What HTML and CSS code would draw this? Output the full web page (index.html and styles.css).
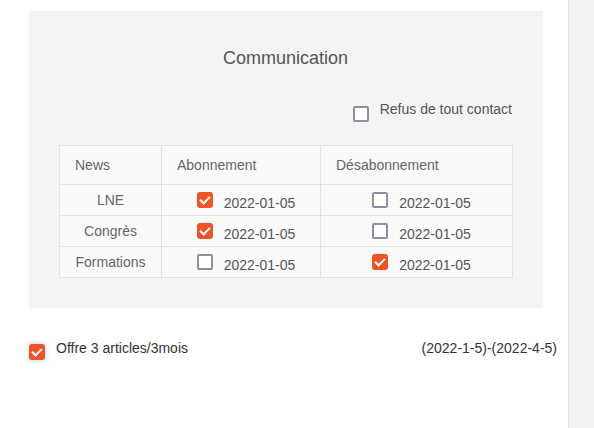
FILE: index.html
```html
<!DOCTYPE html>
<html lang="fr">
<head>
<meta charset="utf-8">
<title>Communication</title>
<link rel="stylesheet" href="styles.css">
</head>
<body>
<div class="layout">
  <main class="main">
    <section class="panel">
      <h2 class="title">Communication</h2>
      <div class="refus">
        <span class="cb"></span>
        <span class="refus-label">Refus de tout contact</span>
      </div>
      <table class="grid">
        <colgroup>
          <col class="c1"><col class="c2"><col class="c3">
        </colgroup>
        <thead>
          <tr><th>News</th><th>Abonnement</th><th>Désabonnement</th></tr>
        </thead>
        <tbody>
          <tr>
            <td class="name">LNE</td>
            <td><div class="cell cell-ab"><span class="cb on"></span><span class="date">2022-01-05</span></div></td>
            <td><div class="cell cell-des"><span class="cb"></span><span class="date">2022-01-05</span></div></td>
          </tr>
          <tr>
            <td class="name">Congrès</td>
            <td><div class="cell cell-ab"><span class="cb on"></span><span class="date">2022-01-05</span></div></td>
            <td><div class="cell cell-des"><span class="cb"></span><span class="date">2022-01-05</span></div></td>
          </tr>
          <tr>
            <td class="name">Formations</td>
            <td><div class="cell cell-ab"><span class="cb"></span><span class="date">2022-01-05</span></div></td>
            <td><div class="cell cell-des"><span class="cb on"></span><span class="date">2022-01-05</span></div></td>
          </tr>
        </tbody>
      </table>
    </section>
    <div class="offer">
      <span class="cb on focus"></span>
      <span class="offer-label">Offre 3 articles/3mois</span>
      <span class="offer-dates">(2022-1-5)-(2022-4-5)</span>
    </div>
  </main>
  <aside class="side"></aside>
</div>
</body>
</html>
```

FILE: styles.css
```css
* { box-sizing: border-box; }
html, body { margin: 0; padding: 0; }
body {
  font-family: "Liberation Sans", Arial, sans-serif;
  font-size: 14px;
  color: #555;
  background: #fff;
}
.layout {
  display: flex;
  height: 428px;
}
.main {
  width: 568px;
  padding: 11px 11px 0 29px;
}
.side {
  flex: 1;
  background: #f1f1f3;
  border-left: 1px solid #e4e4ec;
}
.panel {
  width: 514px;
  background: #f4f4f4;
  padding: 37px 31px 30px 30px;
  display: flex;
  flex-direction: column;
}
.title {
  margin: 0;
  font-size: 18px;
  font-weight: normal;
  line-height: 21px;
  text-align: center;
  color: #555;
}
.refus {
  margin-top: 32px;
  display: flex;
  align-items: flex-start;
  justify-content: flex-end;
  gap: 11px;
  line-height: 16px;
}
.refus .cb { margin-top: 5px; }
.refus-label { color: #555; }

.cb {
  display: inline-block;
  flex: none;
  width: 16px;
  height: 16px;
  border: 2px solid #8e8e9c;
  border-radius: 2px;
  background: #fff;
  position: relative;
}
.cb.on {
  background: #ee5424;
  border-color: #ee5424;
  border-radius: 3px;
}
.cb.on::after {
  content: "";
  position: absolute;
  left: 3px;
  top: 0px;
  width: 4px;
  height: 8px;
  border: solid #fff;
  border-width: 0 2.5px 2.5px 0;
  transform: rotate(45deg);
}
.cb.focus {
  box-shadow: 0 0 4px 1px rgba(120, 160, 230, 0.35);
}

.grid {
  margin-top: 23px;
  width: 453px;
  border-collapse: collapse;
  background: #fafafa;
  table-layout: fixed;
}
.c1 { width: 102px; }
.c2 { width: 159px; }
.c3 { width: 192px; }
.grid th, .grid td {
  border: 1px solid #e2e2e2;
  padding: 0;
  font-weight: normal;
  color: #666;
  vertical-align: middle;
}
.grid th {
  height: 39px;
  text-align: left;
  padding-left: 15px;
}
.grid td { height: 31px; }
.grid td.name { text-align: center; }
.cell {
  display: flex;
  align-items: center;
  justify-content: center;
  gap: 11px;
}
.cell-ab { padding-left: 10px; }
.cell-des { padding-left: 10px; }
.date {
  margin-top: 6px;
  line-height: 16px;
  color: #555;
}

.offer {
  margin-top: 32px;
  display: flex;
  align-items: flex-start;
  line-height: 16px;
  color: #333;
}
.offer .cb { margin-top: 4px; }
.offer-label { margin-left: 11px; }
.offer-dates { margin-left: auto; }
```
